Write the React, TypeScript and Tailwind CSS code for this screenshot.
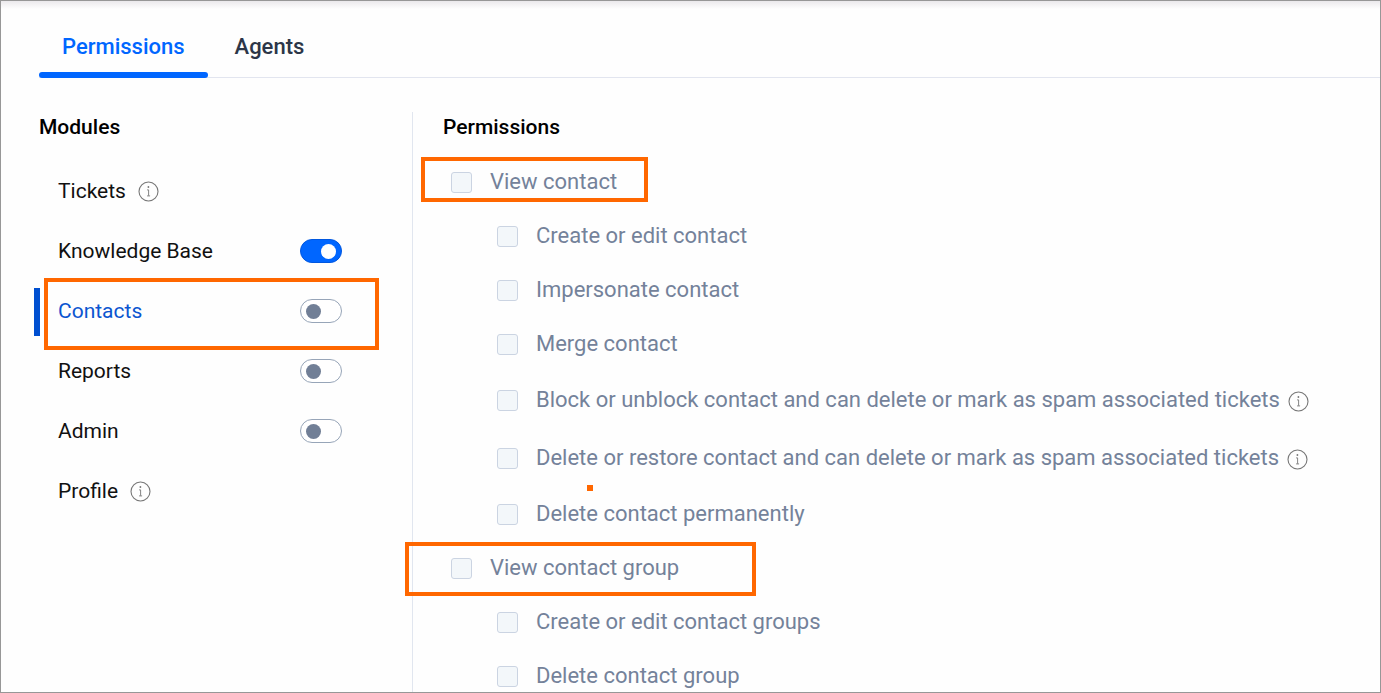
import { useId, useState } from "react";

type ModuleItem = { name: string; info?: boolean; enabled?: boolean };

type Permission = {
  label: string;
  nested?: boolean;
  info?: boolean;
  mark?: "contact" | "group" | "dot";
};

const modules: ModuleItem[] = [
  { name: "Tickets", info: true },
  { name: "Knowledge Base", enabled: true },
  { name: "Contacts", enabled: false },
  { name: "Reports", enabled: false },
  { name: "Admin", enabled: false },
  { name: "Profile", info: true },
];

const permissions: Permission[] = [
  { label: "View contact", mark: "contact" },
  { label: "Create or edit contact", nested: true },
  { label: "Impersonate contact", nested: true },
  { label: "Merge contact", nested: true },
  {
    label: "Block or unblock contact and can delete or mark as spam associated tickets",
    nested: true,
    info: true,
  },
  {
    label: "Delete or restore contact and can delete or mark as spam associated tickets",
    nested: true,
    info: true,
    mark: "dot",
  },
  { label: "Delete contact permanently", nested: true },
  { label: "View contact group", mark: "group" },
  { label: "Create or edit contact groups", nested: true },
  { label: "Delete contact group", nested: true },
];

const marks = {
  contact: "-left-[22px] top-[2px] h-[45px] w-[227px] border-4",
  group: "-left-[38px] top-px h-[54px] w-[351px] border-4",
  dot: "left-[144px] bottom-[-4px] h-[5px] w-[6px] border-[3px]",
};

function InfoIcon() {
  return (
    <svg className="size-[21px] shrink-0" viewBox="0 0 21 21" fill="none" aria-hidden="true">
      <circle cx="10.5" cy="10.5" r="9.5" stroke="#777777" strokeWidth="1.1" />
      <circle cx="10.4" cy="6" r="0.9" fill="#777777" />
      <path d="M9.1 8.9h1.5v5.8M9.1 14.9h3" stroke="#777777" strokeWidth="0.9" />
    </svg>
  );
}

function ModuleRow({
  item,
  selected,
  onSelect,
}: {
  item: ModuleItem;
  selected: boolean;
  onSelect: () => void;
}) {
  const id = useId();
  const [on, setOn] = useState(item.enabled ?? false);
  return (
    <li className="relative flex h-15 items-center pr-[70px] pl-[19px]">
      {selected && (
        <>
          <span className="absolute top-[7px] -left-[5px] h-12 w-[6px] bg-[#004fd0]" />
          <span className="pointer-events-none absolute -top-[3px] right-[33px] left-[5px] h-[72px] border-4 border-[#ff6700]" />
        </>
      )}
      <button
        id={id}
        type="button"
        onClick={onSelect}
        className={selected ? "text-[#0b55d0]" : "text-[#111111]"}
      >
        {item.name}
      </button>
      {item.info && (
        <span className="ml-3">
          <InfoIcon />
        </span>
      )}
      {item.enabled !== undefined && (
        <input
          type="checkbox"
          role="switch"
          aria-labelledby={id}
          checked={on}
          onChange={() => setOn(!on)}
          className="ml-auto flex h-6 w-[42px] shrink-0 appearance-none items-center rounded-full border border-[#97a5b8] bg-white px-[5px] before:size-[15px] before:rounded-full before:bg-[#717f96] checked:justify-end checked:border-[#0057e0] checked:bg-[#0066ff] checked:before:bg-white"
        />
      )}
    </li>
  );
}

function PermissionRow({ item }: { item: Permission }) {
  const id = useId();
  return (
    <li
      className={`relative flex items-center ${item.info ? "h-[58px]" : "h-[54px]"} ${
        item.nested ? "pl-[54px]" : "pl-2"
      }`}
    >
      {item.mark && (
        <span
          className={`pointer-events-none absolute border-[#ff6700] ${marks[item.mark]}`}
        />
      )}
      <input
        id={id}
        type="checkbox"
        disabled
        className="size-[21px] shrink-0 appearance-none rounded-[3px] border border-[#cbd4e2] bg-[#f3f7fa]"
      />
      <label htmlFor={id} className="ml-[18px] whitespace-nowrap text-[#74829a]">
        {item.label}
      </label>
      {item.info && (
        <span className="mt-[3px] ml-2">
          <InfoIcon />
        </span>
      )}
    </li>
  );
}

export default function App() {
  const [tab, setTab] = useState("Permissions");
  const [selected, setSelected] = useState("Contacts");
  return (
    <div className="flex h-screen flex-col overflow-hidden border border-[#979797] bg-[#fefefe] bg-[linear-gradient(#ebe9ec,#fefefe_8px)] pl-[38px] font-['Roboto',sans-serif] text-[22px] leading-[30px]">
      <div role="tablist" className="flex h-[77px] shrink-0 gap-1 border-b border-[#e2e5ef]">
        {["Permissions", "Agents"].map((name) => (
          <button
            key={name}
            type="button"
            role="tab"
            aria-selected={tab === name}
            onClick={() => setTab(name)}
            className={`relative px-[23px] pt-4 font-medium ${
              tab === name ? "text-[#0066ff]" : "text-[#2c3648]"
            }`}
          >
            {name}
            {tab === name && (
              <span className="absolute inset-x-0 -bottom-px h-[6px] rounded-[3px] bg-[#0066ff]" />
            )}
          </button>
        ))}
      </div>
      <div className="flex min-h-0 flex-1 pt-[34px]">
        <nav className="w-[374px] shrink-0 border-r border-[#e1e6ef] text-[21px] leading-[30px]">
          <h2 className="font-medium text-black">Modules</h2>
          <ul className="mt-[19px]">
            {modules.map((item) => (
              <ModuleRow
                key={item.name}
                item={item}
                selected={selected === item.name}
                onSelect={() => setSelected(item.name)}
              />
            ))}
          </ul>
        </nav>
        <main className="min-w-0 flex-1 pl-[30px]">
          <h2 className="text-[21px] leading-[30px] font-medium text-black">Permissions</h2>
          <ul className="mt-[13px]">
            {permissions.map((item) => (
              <PermissionRow key={item.label} item={item} />
            ))}
          </ul>
        </main>
      </div>
    </div>
  );
}
